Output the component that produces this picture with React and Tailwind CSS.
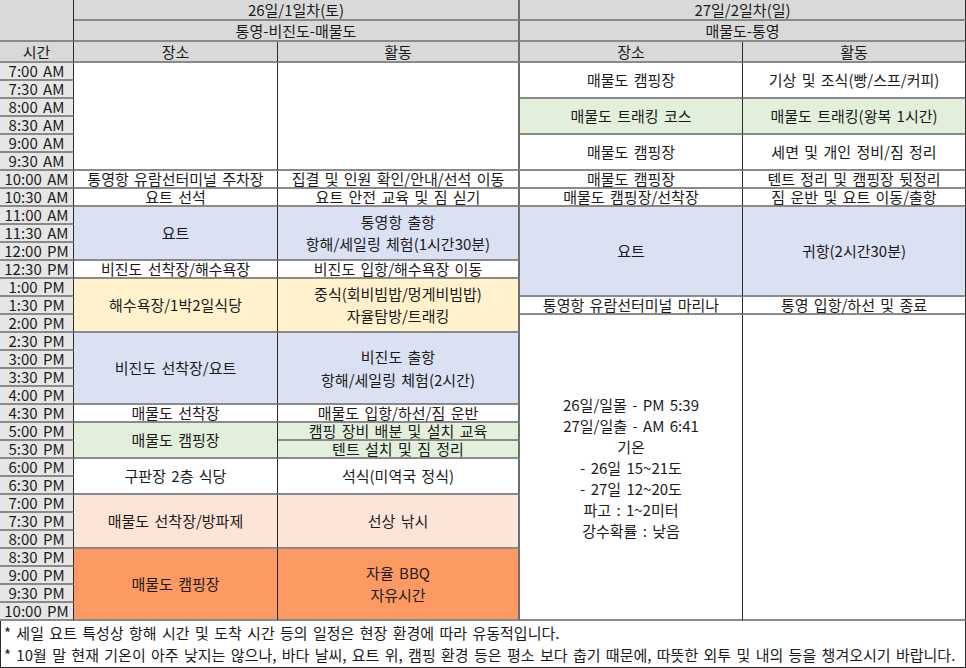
import React from "react";

const BASE =
  "flex flex-col items-center justify-center text-center border-b-2 border-b-[#8a8a8a] whitespace-nowrap";
const RD = " border-r border-r-[#2b2b2b]";
const RM = " border-r-2 border-r-[#6e6e6e]";

function C({ className = "", mid = false, children }) {
  return <div className={BASE + (mid ? RM : RD) + " " + className}>{children}</div>;
}

const times = [
  "7:00 AM", "7:30 AM", "8:00 AM", "8:30 AM", "9:00 AM", "9:30 AM", "10:00 AM", "10:30 AM",
  "11:00 AM", "11:30 AM", "12:00 PM", "12:30 PM", "1:00 PM", "1:30 PM", "2:00 PM", "2:30 PM",
  "3:00 PM", "3:30 PM", "4:00 PM", "4:30 PM", "5:00 PM", "5:30 PM", "6:00 PM", "6:30 PM",
  "7:00 PM", "7:30 PM", "8:00 PM", "8:30 PM", "9:00 PM", "9:30 PM", "10:00 PM",
];

export default function App() {
  return (
    <div className="w-[966px] h-[668px] overflow-hidden bg-white text-[#1a1a1a] text-[15px] font-['Noto_Sans_CJK_KR','Noto_Sans',sans-serif] leading-[16px] [word-spacing:2px]">
      <div className="grid grid-cols-[74px_204px_242px_223px_223px] grid-rows-[repeat(3,21px)_repeat(31,18px)]">
        {/* header */}
        <C className="col-start-1 row-start-1 row-span-2 bg-[#d9d9d9]" />
        <C mid className="col-start-2 col-span-2 row-start-1 bg-[#d9d9d9]">26일/1일차(토)</C>
        <C className="col-start-4 col-span-2 row-start-1 bg-[#d9d9d9]">27일/2일차(일)</C>
        <C mid className="col-start-2 col-span-2 row-start-2 bg-[#d9d9d9]">통영-비진도-매물도</C>
        <C className="col-start-4 col-span-2 row-start-2 bg-[#d9d9d9]">매물도-통영</C>
        <C className="col-start-1 row-start-3 bg-[#d9d9d9]">시간</C>
        <C className="col-start-2 row-start-3 bg-[#d9d9d9]">장소</C>
        <C mid className="col-start-3 row-start-3 bg-[#d9d9d9]">활동</C>
        <C className="col-start-4 row-start-3 bg-[#d9d9d9]">장소</C>
        <C className="col-start-5 row-start-3 bg-[#d9d9d9]">활동</C>

        {/* time column */}
        <div className="col-start-1 row-start-4 row-span-31 grid grid-rows-[repeat(31,18px)]">
          {times.map((t) => (
            <C key={t} className="bg-[#e7e6e6]">{t}</C>
          ))}
        </div>

        {/* day 1 place */}
        <C className="col-start-2 row-start-4 row-span-6" />
        <C className="col-start-2 row-start-10">통영항 유람선터미널 주차장</C>
        <C className="col-start-2 row-start-11">요트 선석</C>
        <C className="col-start-2 row-start-12 row-span-3 bg-[#d9e1f2]">요트</C>
        <C className="col-start-2 row-start-15">비진도 선착장/해수욕장</C>
        <C className="col-start-2 row-start-16 row-span-3 bg-[#fff2cc]">해수욕장/1박2일식당</C>
        <C className="col-start-2 row-start-19 row-span-4 bg-[#d9e1f2]">비진도 선착장/요트</C>
        <C className="col-start-2 row-start-23">매물도 선착장</C>
        <C className="col-start-2 row-start-24 row-span-2 bg-[#e2efda]">매물도 캠핑장</C>
        <C className="col-start-2 row-start-26 row-span-2">구판장 2층 식당</C>
        <C className="col-start-2 row-start-28 row-span-3 bg-[#fce4d6]">매물도 선착장/방파제</C>
        <C className="col-start-2 row-start-31 row-span-4 bg-[#fd9a63]">매물도 캠핑장</C>

        {/* day 1 activity */}
        <C mid className="col-start-3 row-start-4 row-span-6" />
        <C mid className="col-start-3 row-start-10">집결 및 인원 확인/안내/선석 이동</C>
        <C mid className="col-start-3 row-start-11">요트 안전 교육 및 짐 싣기</C>
        <C mid className="col-start-3 row-start-12 row-span-3 bg-[#d9e1f2] leading-[22px]">
          <span>통영항 출항</span>
          <span>항해/세일링 체험(1시간30분)</span>
        </C>
        <C mid className="col-start-3 row-start-15">비진도 입항/해수욕장 이동</C>
        <C mid className="col-start-3 row-start-16 row-span-3 bg-[#fff2cc] leading-[22px]">
          <span>중식(회비빔밥/멍게비빔밥)</span>
          <span>자율탐방/트래킹</span>
        </C>
        <C mid className="col-start-3 row-start-19 row-span-4 bg-[#d9e1f2] leading-[23px]">
          <span>비진도 출항</span>
          <span>항해/세일링 체험(2시간)</span>
        </C>
        <C mid className="col-start-3 row-start-23">매물도 입항/하선/짐 운반</C>
        <C mid className="col-start-3 row-start-24 bg-[#e2efda]">캠핑 장비 배분 및 설치 교육</C>
        <C mid className="col-start-3 row-start-25 bg-[#e2efda]">텐트 설치 및 짐 정리</C>
        <C mid className="col-start-3 row-start-26 row-span-2">석식(미역국 정식)</C>
        <C mid className="col-start-3 row-start-28 row-span-3 bg-[#fce4d6]">선상 낚시</C>
        <C mid className="col-start-3 row-start-31 row-span-4 bg-[#fd9a63] leading-[22px]">
          <span>자율 BBQ</span>
          <span>자유시간</span>
        </C>

        {/* day 2 place */}
        <C className="col-start-4 row-start-4 row-span-2">매물도 캠핑장</C>
        <C className="col-start-4 row-start-6 row-span-2 bg-[#e2efda]">매물도 트래킹 코스</C>
        <C className="col-start-4 row-start-8 row-span-2">매물도 캠핑장</C>
        <C className="col-start-4 row-start-10">매물도 캠핑장</C>
        <C className="col-start-4 row-start-11">매물도 캠핑장/선착장</C>
        <C className="col-start-4 row-start-12 row-span-5 bg-[#d9e1f2]">요트</C>
        <C className="col-start-4 row-start-17">통영항 유람선터미널 마리나</C>
        <C className="col-start-4 row-start-18 row-span-17 leading-[21px]">
          <span>26일/일몰 - PM 5:39</span>
          <span>27일/일출 - AM 6:41</span>
          <span>기온</span>
          <span>- 26일 15~21도</span>
          <span>- 27일 12~20도</span>
          <span>파고 : 1~2미터</span>
          <span>강수확률 : 낮음</span>
        </C>

        {/* day 2 activity */}
        <C className="col-start-5 row-start-4 row-span-2">기상 및 조식(빵/스프/커피)</C>
        <C className="col-start-5 row-start-6 row-span-2 bg-[#e2efda]">매물도 트래킹(왕복 1시간)</C>
        <C className="col-start-5 row-start-8 row-span-2">세면 및 개인 정비/짐 정리</C>
        <C className="col-start-5 row-start-10">텐트 정리 및 캠핑장 뒷정리</C>
        <C className="col-start-5 row-start-11">짐 운반 및 요트 이동/출항</C>
        <C className="col-start-5 row-start-12 row-span-5 bg-[#d9e1f2]">귀항(2시간30분)</C>
        <C className="col-start-5 row-start-17">통영 입항/하선 및 종료</C>
        <C className="col-start-5 row-start-18 row-span-17" />
      </div>

      {/* footer */}
      <div className="h-[47px] border-x border-b border-[#2b2b2b] flex flex-col justify-center pl-[3px] gap-[6px]">
        <div>* 세일 요트 특성상 항해 시간 및 도착 시간 등의 일정은 현장 환경에 따라 유동적입니다.</div>
        <div>* 10월 말 현재 기온이 아주 낮지는 않으나, 바다 날씨, 요트 위, 캠핑 환경 등은 평소 보다 춥기 때문에, 따뜻한 외투 및 내의 등을 챙겨오시기 바랍니다.</div>
      </div>
    </div>
  );
}
